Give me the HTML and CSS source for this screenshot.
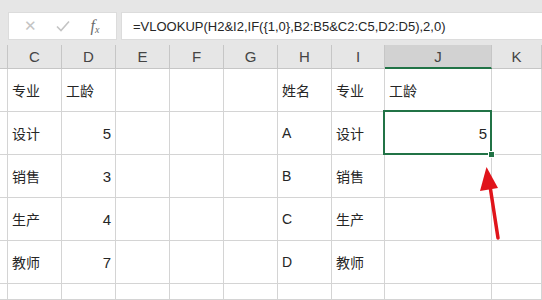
FILE: index.html
```html
<!DOCTYPE html>
<html lang="zh">
<head>
    <meta charset="UTF-8">
    <title>VLOOKUP 多条件查找</title>
    <link rel="stylesheet" href="styles.css">
</head>
<body>

<div class="formula-bar">
    <div class="name-tools">
        <span class="tool cancel">✕</span>
        <span class="tool confirm">
            <svg width="14" height="12" viewBox="0 0 14 12"><path d="M1 6.5 L5 10.5 L13 1.5" fill="none" stroke="#c4c4c4" stroke-width="1.6"/></svg>
        </span>
        <span class="tool fx">f<span class="fx-x">x</span></span>
    </div>
    <div class="formula">=VLOOKUP(H2&amp;I2,IF({1,0},B2:B5&amp;C2:C5,D2:D5),2,0)</div>
</div>

<div class="sheet">
    <div class="head corner"></div>
    <div class="head">C</div>
    <div class="head">D</div>
    <div class="head">E</div>
    <div class="head">F</div>
    <div class="head">G</div>
    <div class="head">H</div>
    <div class="head">I</div>
    <div class="head active">J</div>
    <div class="head">K</div>

    <div class="rowhead"></div>
    <div class="cell">专业</div>
    <div class="cell">工龄</div>
    <div class="cell"></div>
    <div class="cell"></div>
    <div class="cell"></div>
    <div class="cell">姓名</div>
    <div class="cell">专业</div>
    <div class="cell">工龄</div>
    <div class="cell"></div>

    <div class="rowhead"></div>
    <div class="cell">设计</div>
    <div class="cell num">5</div>
    <div class="cell"></div>
    <div class="cell"></div>
    <div class="cell"></div>
    <div class="cell">A</div>
    <div class="cell">设计</div>
    <div class="cell num selected">5<span class="handle"></span></div>
    <div class="cell"></div>

    <div class="rowhead"></div>
    <div class="cell">销售</div>
    <div class="cell num">3</div>
    <div class="cell"></div>
    <div class="cell"></div>
    <div class="cell"></div>
    <div class="cell">B</div>
    <div class="cell">销售</div>
    <div class="cell"></div>
    <div class="cell"></div>

    <div class="rowhead"></div>
    <div class="cell">生产</div>
    <div class="cell num">4</div>
    <div class="cell"></div>
    <div class="cell"></div>
    <div class="cell"></div>
    <div class="cell">C</div>
    <div class="cell">生产</div>
    <div class="cell"></div>
    <div class="cell"></div>

    <div class="rowhead"></div>
    <div class="cell">教师</div>
    <div class="cell num">7</div>
    <div class="cell"></div>
    <div class="cell"></div>
    <div class="cell"></div>
    <div class="cell">D</div>
    <div class="cell">教师</div>
    <div class="cell"></div>
    <div class="cell"></div>

    <div class="rowhead"></div>
    <div class="cell"></div>
    <div class="cell"></div>
    <div class="cell"></div>
    <div class="cell"></div>
    <div class="cell"></div>
    <div class="cell"></div>
    <div class="cell"></div>
    <div class="cell"></div>
    <div class="cell"></div>
</div>

<svg class="arrow" width="542" height="300" viewBox="0 0 542 300">
    <line x1="498" y1="238" x2="490" y2="186" stroke="#e0141b" stroke-width="3.5" stroke-linecap="round"/>
    <path d="M486.5 167 L480 191 L498 188 Z" fill="#e0141b"/>
</svg>

</body>
</html>
```

FILE: styles.css
```css
html {
    overflow: hidden;
}
body {
    margin: 0;
    width: 542px;
    height: 300px;
    overflow: hidden;
    background-color: #e6e6e6;
    font-family: "Liberation Sans", "Noto Sans CJK SC", sans-serif;
    position: relative;
}
.formula-bar {
    display: flex;
    gap: 4px;
    padding: 12px 0 5px 8px;
    height: 28px;
}
.name-tools {
    width: 109px;
    background-color: #fff;
    display: flex;
    align-items: center;
    box-sizing: border-box;
    border: 1px solid #dcdcdc;
}
.tool {
    color: #c4c4c4;
    font-size: 15px;
    display: flex;
    justify-content: center;
}
.cancel {
    width: 38px;
    margin-left: 2px;
}
.confirm {
    width: 28px;
}
.fx {
    width: 36px;
    color: #6a6a6a;
    font-family: "Liberation Serif", serif;
    font-style: italic;
    font-size: 16px;
    align-items: baseline;
}
.fx-x {
    font-size: 10px;
    position: relative;
    top: 2px;
}
.formula {
    flex: 1;
    background-color: #fff;
    border: 1px solid #dcdcdc;
    border-right: none;
    display: flex;
    align-items: center;
    padding-left: 11px;
    font-size: 13px;
    color: #262626;
}
.sheet {
    display: grid;
    grid-template-columns: 8px 54px 54px 54px 54px 54px 54px 53px 107px 1fr;
    grid-template-rows: 24px repeat(5, 43px) 16px;
    background-color: #fff;
}
.head {
    background-color: #e6e6e6;
    border-right: 1px solid #c6c6c6;
    border-bottom: 1px solid #c6c6c6;
    display: flex;
    justify-content: center;
    align-items: center;
    font-size: 15px;
    color: #444;
    box-sizing: border-box;
}
.head.active {
    background-color: #d2d2d2;
    border-bottom: 2px solid #217346;
}
.rowhead {
    background-color: #fff;
    border-right: 1px solid #d4d4d4;
    border-bottom: 1px solid #d4d4d4;
}
.cell {
    border-right: 1px solid #d4d4d4;
    border-bottom: 1px solid #d4d4d4;
    box-sizing: border-box;
    display: flex;
    align-items: center;
    padding: 0 4px;
    font-size: 14px;
    color: #262626;
}
.num {
    justify-content: flex-end;
    font-size: 15px;
}
.selected {
    position: relative;
}
.selected::after {
    content: "";
    position: absolute;
    left: -2px;
    top: -2px;
    right: -1px;
    bottom: -1px;
    border: 2px solid #217346;
}
.handle {
    position: absolute;
    right: -4px;
    bottom: -4px;
    width: 5px;
    height: 5px;
    background-color: #217346;
    border: 1px solid #fff;
    z-index: 1;
}
.arrow {
    position: absolute;
    left: 0;
    top: 0;
}
```
